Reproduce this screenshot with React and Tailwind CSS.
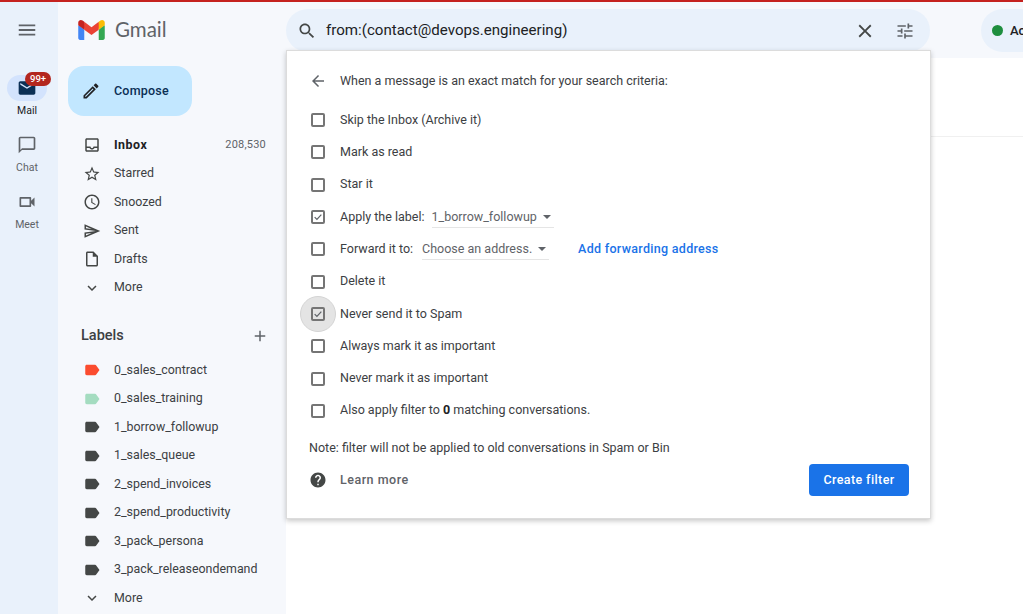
import React from 'react'

const paths = {
  menu: 'M3 18h18v-2H3v2zm0-5h18v-2H3v2zm0-7v2h18V6H3z',
  search: 'M15.5 14h-.79l-.28-.27C15.41 12.59 16 11.11 16 9.5 16 5.91 13.09 3 9.5 3S3 5.91 3 9.5 5.91 16 9.5 16c1.61 0 3.09-.59 4.23-1.57l.27.28v.79l5 4.99L20.49 19l-4.99-5zm-6 0C7.01 14 5 11.99 5 9.5S7.01 5 9.5 5 14 7.01 14 9.5 11.99 14 9.5 14z',
  close: 'M19 6.41L17.59 5 12 10.59 6.41 5 5 6.41 10.59 12 5 17.59 6.41 19 12 13.41 17.59 19 19 17.59 13.41 12z',
  tune: 'M3 17v2h6v-2H3zM3 5v2h10V5H3zm10 16v-2h8v-2h-8v-2h-2v6h2zM7 9v2H3v2h4v2h2V9H7zm14 4v-2H11v2h10zm-6-4h2V7h4V5h-4V3h-2v6z',
  edit: 'M3 17.25V21h3.75L17.81 9.94l-3.75-3.75L3 17.25zM5.92 19H5v-.92l9.06-9.06.92.92L5.92 19zM20.71 5.63l-2.34-2.34c-.39-.39-1.02-.39-1.41 0l-1.83 1.83 3.75 3.75 1.83-1.83c.39-.39.39-1.02 0-1.41z',
  inbox: 'M19 3H5c-1.1 0-2 .9-2 2v14c0 1.1.9 2 2 2h14c1.1 0 2-.9 2-2V5c0-1.1-.9-2-2-2zm0 16H5v-3h3.56c.69 1.19 1.97 2 3.44 2s2.75-.81 3.44-2H19v3zm0-5h-4.99c0 1.1-.9 2-2 2s-2-.9-2-2H5V5h14v9z',
  star: 'M22 9.24l-7.19-.62L12 2 9.19 8.63 2 9.24l5.46 4.73L5.82 21 12 17.27 18.18 21l-1.63-7.03L22 9.24zM12 15.4l-3.76 2.27 1-4.28-3.32-2.88 4.38-.38L12 6.1l1.71 4.04 4.38.38-3.32 2.88 1 4.28L12 15.4z',
  clock: 'M11.99 2C6.47 2 2 6.48 2 12s4.47 10 9.99 10C17.52 22 22 17.52 22 12S17.52 2 11.99 2zM12 20c-4.42 0-8-3.58-8-8s3.58-8 8-8 8 3.58 8 8-3.58 8-8 8zm.5-13H11v6l5.25 3.15.75-1.23-4.5-2.67z',
  send: 'M4.01 6.03l7.51 3.22-7.52-1 .01-2.22m7.5 8.72L4 17.97v-2.22l7.51-1M2.01 3L2 10l15 2-15 2 .01 7L23 12 2.01 3z',
  draft: 'M14 2H6c-1.1 0-1.99.9-1.99 2L4 20c0 1.1.89 2 1.99 2H18c1.1 0 2-.9 2-2V8l-6-6zM6 20V4h7v5h5v11H6z',
  more: 'M16.59 8.59L12 13.17 7.41 8.59 6 10l6 6 6-6z',
  add: 'M19 13h-6v6h-2v-6H5v-2h6V5h2v6h6v2z',
  label: 'M17.63 5.84C17.27 5.33 16.67 5 16 5L5 5.01C3.9 5.01 3 5.9 3 7v10c0 1.1.9 1.99 2 1.99L16 19c.67 0 1.27-.33 1.63-.84L22 12l-4.37-6.16z',
  chat: 'M20 2H4c-1.1 0-2 .9-2 2v18l4-4h14c1.1 0 2-.9 2-2V4c0-1.1-.9-2-2-2zm0 14H6l-2 2V4h16v12z',
  video: 'M15 8v8H5V8h10m1-2H4c-.55 0-1 .45-1 1v10c0 .55.45 1 1 1h12c.55 0 1-.45 1-1v-3.5l4 4v-11l-4 4V7c0-.55-.45-1-1-1z',
  mail: 'M20 4H4c-1.1 0-2 .9-2 2v12c0 1.1.9 2 2 2h16c1.1 0 2-.9 2-2V6c0-1.1-.9-2-2-2zm0 4l-8 5-8-5V6l8 5 8-5v2z',
  back: 'M20 11H7.83l5.59-5.59L12 4l-8 8 8 8 1.41-1.41L7.83 13H20v-2z',
  help: 'M12 2C6.48 2 2 6.48 2 12s4.48 10 10 10 10-4.48 10-10S17.52 2 12 2zm1 17h-2v-2h2v2zm2.07-7.75l-.9.92C13.45 12.9 13 13.5 13 15h-2v-.5c0-1.1.45-2.1 1.17-2.83l1.24-1.26c.37-.36.59-.86.59-1.41 0-1.1-.9-2-2-2s-2 .9-2 2H8c0-2.21 1.79-4 4-4s4 1.79 4 4c0 .88-.36 1.68-.93 2.25z',
}

const Icon = ({ name, className }) => (
  <svg viewBox="0 0 24 24" fill="currentColor" className={className}>
    <path d={paths[name]} />
  </svg>
)

const GmailLogo = () => (
  <svg viewBox="0 0 256 193" className="w-[27px] h-[20px] shrink-0">
    <path fill="#4285F4" d="M58.182 192.05V93.14L27.507 65.077 0 49.504v125.091c0 9.658 7.825 17.455 17.455 17.455h40.727Z" />
    <path fill="#34A853" d="M197.818 192.05h40.727c9.659 0 17.455-7.826 17.455-17.455V49.505l-31.156 17.837-27.026 25.798v98.91Z" />
    <path fill="#EA4335" d="m58.182 93.14-4.174-38.647 4.174-36.989L128 69.868l69.818-52.364 4.67 34.992-4.67 40.644L128 145.504z" />
    <path fill="#FBBC04" d="M197.818 17.504V93.14L256 49.504V26.231c0-21.585-24.64-33.89-41.89-20.945l-16.292 12.218Z" />
    <path fill="#C5221F" d="m0 49.504 26.759 20.07L58.182 93.14V17.504L41.89 5.286C24.61-7.66 0 4.646 0 26.23v23.273Z" />
  </svg>
)

const mainNav = [
  { icon: 'inbox', text: 'Inbox', count: '208,530', bold: true },
  { icon: 'star', text: 'Starred' },
  { icon: 'clock', text: 'Snoozed' },
  { icon: 'send', text: 'Sent' },
  { icon: 'draft', text: 'Drafts' },
  { icon: 'more', text: 'More' },
]

const labels = [
  { text: '0_sales_contract', color: 'text-[#fb4c2f]' },
  { text: '0_sales_training', color: 'text-[#a4dcc0]' },
  { text: '1_borrow_followup', color: 'text-[#444746]' },
  { text: '1_sales_queue', color: 'text-[#444746]' },
  { text: '2_spend_invoices', color: 'text-[#444746]' },
  { text: '2_spend_productivity', color: 'text-[#444746]' },
  { text: '3_pack_persona', color: 'text-[#444746]' },
  { text: '3_pack_releaseondemand', color: 'text-[#444746]' },
]

const NavRow = ({ icon, text, count, bold, color = 'text-[#444746]' }) => (
  <div className="flex items-center h-[28.5px] pl-[25px] pr-[20px]">
    <Icon name={icon} className={`w-[18px] h-[18px] shrink-0 ${color}`} />
    <span className={`ml-[13px] text-[12.4px] ${bold ? 'font-bold tracking-[0.5px] text-[#202124]' : 'text-[#3c4043]'}`}>{text}</span>
    {count && <span className="ml-auto text-[11px] tracking-[0.2px] text-[#5f6368]">{count}</span>}
  </div>
)

const RailItem = ({ icon, text }) => (
  <div className="flex flex-col items-center h-[57px]">
    <div className="flex items-center justify-center w-[40px] h-[26px]">
      <Icon name={icon} className="w-[20px] h-[20px] text-[#5f6368]" />
    </div>
    <span className="mt-[3px] text-[10.5px] leading-[14px] text-[#5f6368]">{text}</span>
  </div>
)

const Checkbox = ({ checked, focus }) => (
  <div className="relative w-[14px] h-[14px] shrink-0">
    {focus && <div className="absolute -left-[11px] -top-[11px] w-[36px] h-[36px] rounded-full bg-[#e4e4e4] border border-[#d4d4d4]" />}
    <div className="relative flex items-center justify-center w-[14px] h-[14px] rounded-[2px] border-2 border-[#757575]">
      {checked && (
        <svg viewBox="0 0 12 12" className="w-[10px] h-[10px] text-[#5f6368]" fill="none" stroke="currentColor" strokeWidth="1.5">
          <path d="M2 6.2l2.7 2.6L10 3.2" />
        </svg>
      )}
    </div>
  </div>
)

const Select = ({ text, width }) => (
  <span className={`flex items-center justify-between h-[21px] pt-[1px] border-b border-[#e5e5e5] text-[#5f6368] ${width}`}>
    {text}
    <span className="mr-[3px] w-0 h-0 border-x-[4px] border-x-transparent border-t-[4px] border-t-[#5f6368]" />
  </span>
)

const FilterRow = ({ checked, focus, children }) => (
  <div className="flex items-center h-[32.3px] text-[12.5px] text-[#3c4043]">
    <Checkbox checked={checked} focus={focus} />
    <div className="relative ml-[15px] flex items-center">{children}</div>
  </div>
)

export default function App() {
  return (
    <div className="flex flex-col w-[1023px] h-[614px] overflow-hidden bg-[#f6f8fc] font-['Roboto',sans-serif]">
      <div className="h-[2px] shrink-0 bg-[#c5221f]" />
      <div className="flex flex-1 min-h-0">
        <div className="flex flex-col items-center w-[58px] shrink-0 pr-[4px] bg-[#e9f1fb]">
          <div className="flex items-center justify-center h-[56px] text-[#5f6368]">
            <Icon name="menu" className="w-[22px] h-[22px]" />
          </div>
          <div className="flex flex-col items-center h-[57px] mt-[17px]">
            <div className="relative flex items-center justify-center w-[40px] h-[26px] rounded-full bg-[#d3e3fd]">
              <Icon name="mail" className="w-[20px] h-[20px] text-[#0b2f55]" />
              <span className="absolute left-[18px] -top-[3px] h-[14px] px-[5px] rounded-full bg-[#b3261e] text-[9.5px] leading-[14px] font-medium text-white">99+</span>
            </div>
            <span className="mt-[3px] text-[10.5px] leading-[14px] text-[#202124]">Mail</span>
          </div>
          <RailItem icon="chat" text="Chat" />
          <RailItem icon="video" text="Meet" />
        </div>

        <div className="flex flex-col w-[228px] shrink-0">
          <div className="flex items-center h-[56px] shrink-0 pl-[20px]">
            <GmailLogo />
            <span className="ml-[10px] -mt-[2px] text-[20.5px] text-[#5f6368] font-['Lato',sans-serif]">Gmail</span>
          </div>
          <div className="flex items-center w-[124px] h-[50px] ml-[10px] mt-[8px] rounded-[16px] bg-[#c2e7ff]">
            <Icon name="edit" className="ml-[13px] w-[20px] h-[20px] text-[#202124]" />
            <span className="ml-[13px] text-[12.5px] font-medium tracking-[0.2px] text-[#0b2f55]">Compose</span>
          </div>
          <div className="mt-[15px]">
            {mainNav.map((item) => <NavRow key={item.text} {...item} />)}
          </div>
          <div className="flex items-center justify-between h-[28px] mt-[20px] pl-[23px] pr-[17px]">
            <span className="text-[14.5px] font-medium text-[#3c4043]">Labels</span>
            <Icon name="add" className="w-[18px] h-[18px] text-[#5f6368]" />
          </div>
          <div className="mt-[6px]">
            {labels.map((item) => <NavRow key={item.text} icon="label" text={item.text} color={item.color} />)}
            <NavRow icon="more" text="More" />
          </div>
        </div>

        <div className="relative flex flex-col flex-1 min-w-0">
          <div className="flex items-start h-[56px] shrink-0 pt-[7px]">
            <div className="flex items-center w-[644px] h-[43px] shrink-0 rounded-[24px] bg-[#e9f1fb]">
              <Icon name="search" className="ml-[11px] w-[20px] h-[20px] text-[#444746]" />
              <span className="ml-[9px] text-[15.1px] text-[#202124]">from:(contact@devops.engineering)</span>
              <Icon name="close" className="ml-auto w-[22px] h-[22px] text-[#444746]" />
              <Icon name="tune" className="ml-[19px] mr-[15px] w-[20px] h-[20px] text-[#5f6368]" />
            </div>
            <div className="flex items-center h-[43px] w-[120px] shrink-0 ml-[51px] pl-[11px] rounded-full bg-[#e9f1fb]">
              <span className="w-[11px] h-[11px] rounded-full bg-[#1e8e3e]" />
              <span className="ml-[7px] text-[13px] font-medium text-[#202124]">Active</span>
            </div>
          </div>
          <div className="flex-1 bg-white">
            <div className="h-[79px] border-b border-[#f0f0f0]" />
          </div>

          <div className="absolute left-0 top-[48px] w-[645px] h-[469px] pt-[14px] pl-[24px] pr-[21px] bg-white border border-[#dcdcdc] shadow-[0_2px_5px_rgba(0,0,0,0.22)]">
            <div className="flex items-center h-[32px] text-[12.5px] text-[#3c4043]">
              <Icon name="back" className="-ml-[2px] w-[18px] h-[18px] text-[#5f6368]" />
              <span className="ml-[13px]">When a message is an exact match for your search criteria:</span>
            </div>
            <div className="mt-[7px]">
              <FilterRow>Skip the Inbox (Archive it)</FilterRow>
              <FilterRow>Mark as read</FilterRow>
              <FilterRow>Star it</FilterRow>
              <FilterRow checked>
                Apply the label:
                <span className="ml-[7px]"><Select text="1_borrow_followup" width="w-[122px]" /></span>
              </FilterRow>
              <FilterRow>
                Forward it to:
                <span className="ml-[9px]"><Select text="Choose an address." width="w-[127px]" /></span>
                <span className="ml-[29px] font-medium tracking-[0.3px] text-[#1a73e8]">Add forwarding address</span>
              </FilterRow>
              <FilterRow>Delete it</FilterRow>
              <FilterRow checked focus>Never send it to Spam</FilterRow>
              <FilterRow>Always mark it as important</FilterRow>
              <FilterRow>Never mark it as important</FilterRow>
              <FilterRow>
                <span>Also apply filter to <b className="font-bold text-[#202124]">0</b> matching conversations.</span>
              </FilterRow>
            </div>
            <div className="flex items-center h-[20px] mt-[11px] -ml-[2px] text-[12.5px] text-[#3c4043]">
              Note: filter will not be applied to old conversations in Spam or Bin
            </div>
            <div className="flex items-center justify-between h-[32px] mt-[6px]">
              <div className="flex items-center">
                <Icon name="help" className="-ml-[2px] w-[18px] h-[18px] text-[#444746]" />
                <span className="ml-[13px] text-[12.5px] font-medium tracking-[0.5px] text-[#5f6368]">Learn more</span>
              </div>
              <button className="w-[100px] h-[32px] rounded-[4px] bg-[#1a73e8] text-[12.5px] font-medium tracking-[0.4px] text-white">Create filter</button>
            </div>
          </div>
        </div>
      </div>
    </div>
  )
}
